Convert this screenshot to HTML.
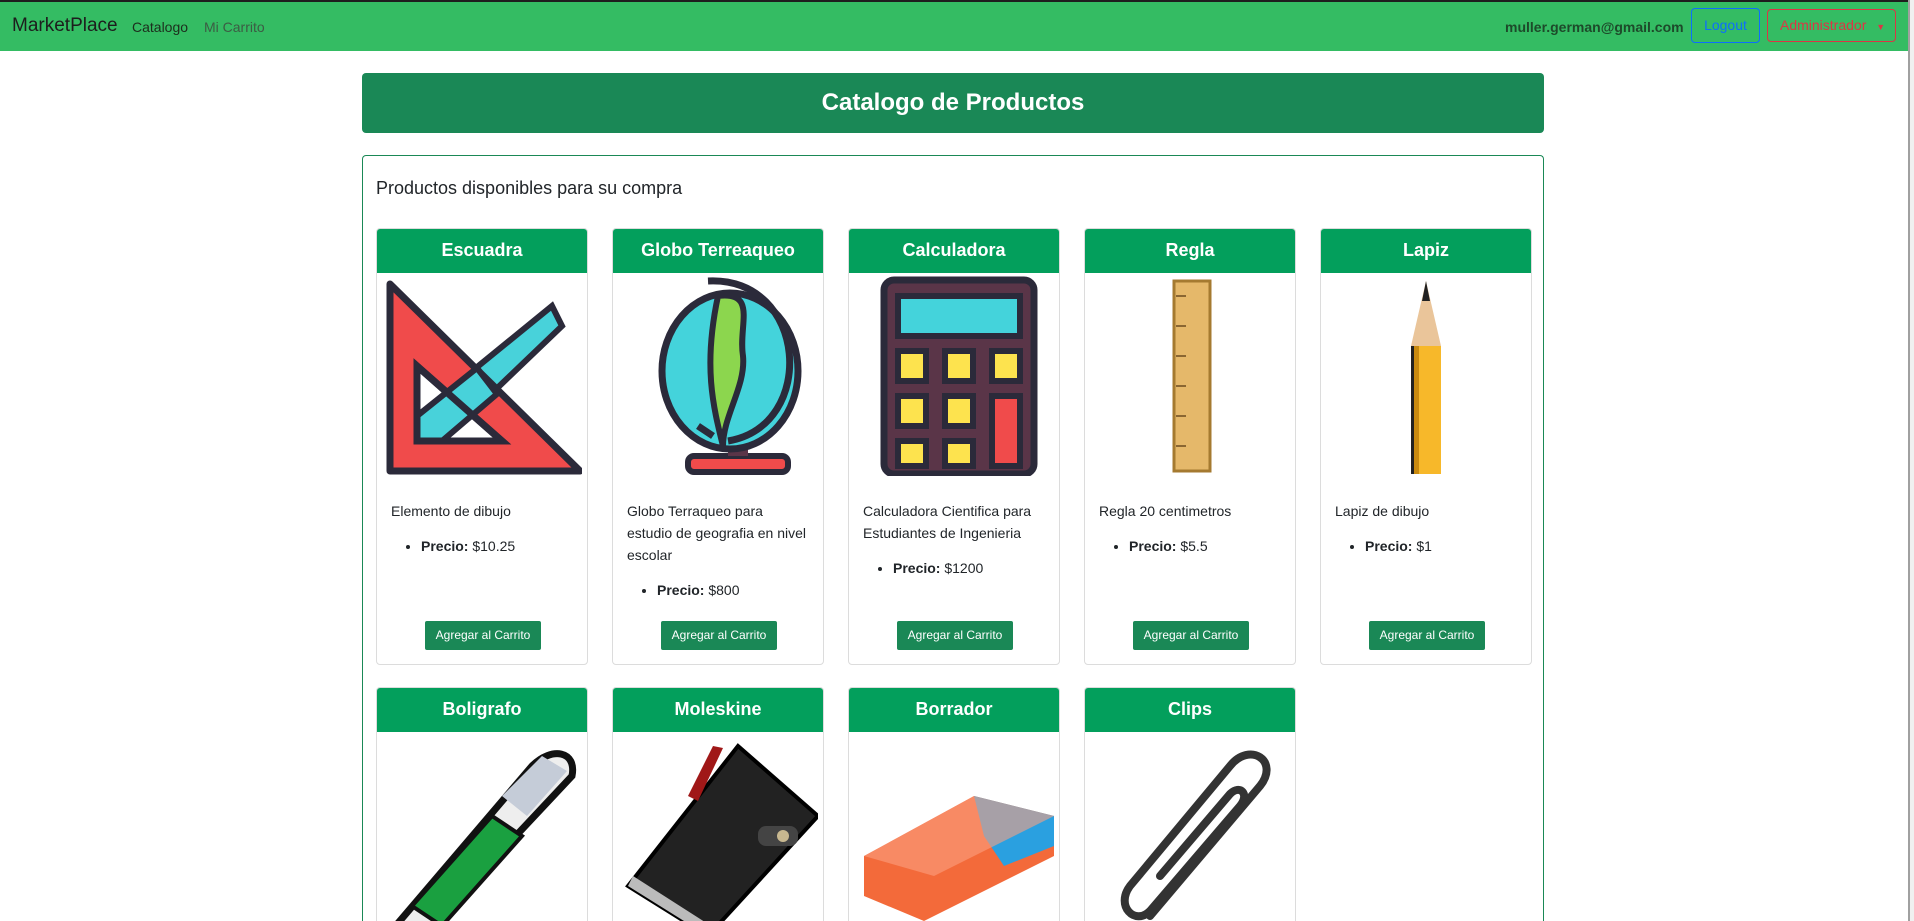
<!DOCTYPE html>
<html style="width:1914px;height:921px;overflow:hidden"><head><meta charset="utf-8"><style>
*{box-sizing:border-box;margin:0;padding:0}
body{width:1914px;height:921px;overflow:hidden;background:#fff;font-family:"Liberation Sans",sans-serif;color:#212529;position:relative}
.nav{position:absolute;left:0;top:0;width:1908px;height:51px;background:#34bc63;border-top:2px solid #1e1e1e}
.sb{position:absolute;left:1908px;top:0;width:6px;height:921px;background:#f0f0f0;border-left:2px solid #a0a0a0}
.t{position:absolute;white-space:nowrap}
.hdr{position:absolute;left:362px;top:73px;width:1182px;height:60px;background:#1a8856;border-radius:4px;color:#fff;font-weight:bold;font-size:24px;text-align:center;line-height:60px}
.panel{position:absolute;left:362px;top:155px;width:1182px;height:766px;border:1px solid #1a8856;border-bottom:none;border-radius:4px 4px 0 0;overflow:hidden}
.card{position:absolute;width:212px;height:437px;border:1px solid #dcdcdc;border-radius:4px;overflow:hidden}
.card.r2{height:235px;border-bottom:none;border-radius:4px 4px 0 0}
.r2 .img{height:190px;align-items:flex-start;padding-top:4px}
.ch{height:44px;background:#039f5c;color:#fff;font-weight:bold;font-size:18px;text-align:center;line-height:42px}
.img{height:206px;display:flex;justify-content:center;align-items:center;overflow:hidden}
.img svg{width:200px;height:200px;flex:none}
.desc{padding:21px 14px 0 14px;font-size:14px;line-height:22px}
.desc ul{margin:13px 0 0 30px}
.btn{position:absolute;left:48px;top:392px;width:116px;height:29px;background:#1a8856;color:#fff;font-size:12px;text-align:center;line-height:29px;border-radius:2px}
</style></head><body>
<div class="nav">
<div class="t" style="left:12px;top:13px;font-size:19px;color:#1d1d1d">MarketPlace</div>
<div class="t" style="left:132px;top:17px;font-size:14px;color:#1d2d1d">Catalogo</div>
<div class="t" style="left:204px;top:17px;font-size:14px;color:#3c5c44">Mi Carrito</div>
<div class="t" style="left:1505px;top:17px;font-size:14px;font-weight:bold;color:#1d4a2a">muller.german@gmail.com</div>
<div class="t" style="left:1691px;top:6px;width:69px;height:35px;border:1px solid #0d6efd;border-radius:4px;color:#0d6efd;font-size:14px;text-align:center;line-height:33px">Logout</div>
<div class="t" style="left:1767px;top:7px;width:129px;height:33px;border:1px solid #dc3545;border-radius:4px;color:#dc3545;font-size:14px;line-height:31px;padding-left:12px">Administrador <span style="font-size:9px;margin-left:6px">▼</span></div>
</div>
<div class="sb"></div>
<div class="hdr">Catalogo de Productos</div>
<div class="panel">
<div class="t" style="left:13px;top:22px;font-size:18px">Productos disponibles para su compra</div>

<div class="card" style="left:13px;top:72px"><div class="ch">Escuadra</div><div class="img"><svg viewBox="0 0 200 200"><polygon points="35,140 170,30 180,50 60,165 35,165" fill="#48d2da" stroke="#2b2a3a" stroke-width="6"/><polygon points="8,8 8,195 198,195" fill="#f04b4b" stroke="#2b2a3a" stroke-width="7" stroke-linejoin="round"/><polygon points="35,90 35,165 120,165" fill="#fff" stroke="#2b2a3a" stroke-width="7"/><polygon points="35,140 95,92 115,118 60,165 35,165" fill="#48d2da" stroke="#2b2a3a" stroke-width="6"/><polygon points="35,90 35,165 120,165" fill="none" stroke="#2b2a3a" stroke-width="7"/></svg></div>
<div class="desc">Elemento de dibujo<ul><li><b>Precio:</b> $10.25</li></ul></div><div class="btn">Agregar al Carrito</div></div>

<div class="card" style="left:249px;top:72px"><div class="ch">Globo Terreaqueo</div><div class="img"><svg viewBox="0 0 200 200"><rect x="70" y="180" width="100" height="16" rx="6" fill="#f04b4b" stroke="#2b2a3a" stroke-width="6"/><rect x="110" y="160" width="20" height="20" fill="#5a3548"/><ellipse cx="112" cy="95" rx="68" ry="78" fill="#44d3db" stroke="#2b2a3a" stroke-width="7"/><path d="M100,20 C140,15 120,50 125,80 C128,110 105,140 105,170 C95,130 85,90 100,20Z" fill="#8cd64e" stroke="#2b2a3a" stroke-width="6"/><path d="M90,5 C190,0 200,150 110,165 M95,160 L80,150" fill="none" stroke="#2b2a3a" stroke-width="7"/></svg></div>
<div class="desc">Globo Terraqueo para estudio de geografia en nivel escolar<ul><li><b>Precio:</b> $800</li></ul></div><div class="btn">Agregar al Carrito</div></div>

<div class="card" style="left:485px;top:72px"><div class="ch">Calculadora</div><div class="img"><svg viewBox="0 0 200 200"><rect x="30" y="4" width="150" height="194" rx="10" fill="#5a3548" stroke="#2b2a3a" stroke-width="7"/><rect x="44" y="20" width="122" height="40" fill="#44d3db" stroke="#2b2a3a" stroke-width="6"/><g fill="#fde34e" stroke="#2b2a3a" stroke-width="6"><rect x="44" y="75" width="28" height="30"/><rect x="91" y="75" width="28" height="30"/><rect x="138" y="75" width="28" height="30"/><rect x="44" y="120" width="28" height="30"/><rect x="91" y="120" width="28" height="30"/><rect x="44" y="165" width="28" height="25"/><rect x="91" y="165" width="28" height="25"/></g><rect x="138" y="120" width="28" height="70" fill="#f04b4b" stroke="#2b2a3a" stroke-width="6"/></svg></div>
<div class="desc">Calculadora Cientifica para Estudiantes de Ingenieria<ul><li><b>Precio:</b> $1200</li></ul></div><div class="btn">Agregar al Carrito</div></div>

<div class="card" style="left:721px;top:72px"><div class="ch">Regla</div><div class="img"><svg viewBox="0 0 200 200"><rect x="84" y="5" width="36" height="190" fill="#e5b86a" stroke="#a57a30" stroke-width="3"/><g stroke="#6b4a20" stroke-width="1.5"><line x1="86" y1="20" x2="96" y2="20"/><line x1="86" y1="50" x2="96" y2="50"/><line x1="86" y1="80" x2="96" y2="80"/><line x1="86" y1="110" x2="96" y2="110"/><line x1="86" y1="140" x2="96" y2="140"/><line x1="86" y1="170" x2="96" y2="170"/></g></svg></div>
<div class="desc">Regla 20 centimetros<ul><li><b>Precio:</b> $5.5</li></ul></div><div class="btn">Agregar al Carrito</div></div>

<div class="card" style="left:957px;top:72px"><div class="ch">Lapiz</div><div class="img"><svg viewBox="0 0 200 200"><polygon points="100,5 85,70 115,70" fill="#eac59a"/><polygon points="100,5 96,25 104,25" fill="#222"/><rect x="85" y="70" width="30" height="128" fill="#f7b82a"/><rect x="85" y="70" width="8" height="128" fill="#c98a10"/><rect x="85" y="70" width="3" height="128" fill="#222"/></svg></div>
<div class="desc">Lapiz de dibujo<ul><li><b>Precio:</b> $1</li></ul></div><div class="btn">Agregar al Carrito</div></div>

<div class="card r2" style="left:13px;top:531px"><div class="ch">Boligrafo</div><div class="img"><svg viewBox="0 0 200 200"><path d="M5,200 L150,30 C170,10 195,15 190,40 L40,200Z" fill="#eee" stroke="#111" stroke-width="7"/><path d="M30,170 L110,80 L140,100 L60,190Z" fill="#1aa040" stroke="#111" stroke-width="4"/><path d="M120,60 L160,20 L185,35 L145,80Z" fill="#c5ccd8"/></svg></div></div>

<div class="card r2" style="left:249px;top:531px"><div class="ch">Moleskine</div><div class="img"><svg viewBox="0 0 200 200"><path d="M10,150 L120,10 L200,80 L90,200Z" fill="#222" stroke="#000" stroke-width="4"/><path d="M10,150 L90,200 L90,188 L15,140Z" fill="#bbb"/><path d="M70,60 L95,10 L105,12 L80,65Z" fill="#a01818"/><rect x="140" y="90" width="40" height="20" rx="8" fill="#444"/><circle cx="165" cy="100" r="6" fill="#c8b890"/></svg></div></div>

<div class="card r2" style="left:485px;top:531px"><div class="ch">Borrador</div><div class="img"><svg viewBox="0 0 200 200"><path d="M10,120 L120,60 L200,80 L200,120 L70,185 L10,160Z" fill="#f36a3a"/><path d="M120,60 L200,80 L200,110 L150,130 L130,100Z" fill="#2aa0e0"/><path d="M10,120 L120,60 L200,80 L80,140Z" fill="#fca080" opacity=".6"/></svg></div></div>

<div class="card r2" style="left:721px;top:531px"><div class="ch">Clips</div><div class="img"><svg viewBox="0 0 200 200"><path d="M60,180 L170,50 C190,25 160,5 140,30 L40,150 C25,170 45,190 60,175 L150,70 C160,58 150,48 140,58 L70,140" fill="none" stroke="#333" stroke-width="8" stroke-linecap="round"/></svg></div></div>
</div>
</body></html>
